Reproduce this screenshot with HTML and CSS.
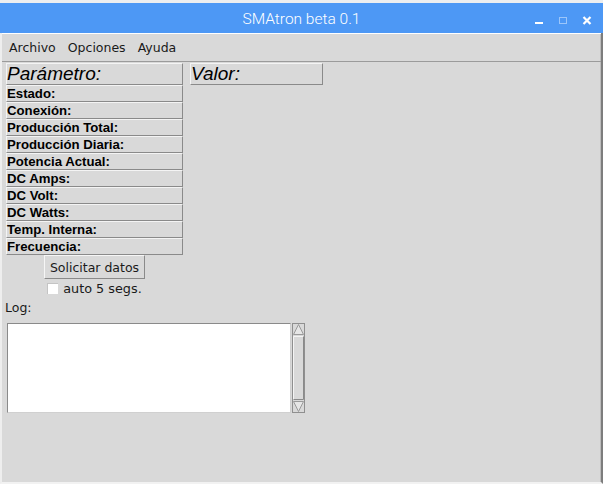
FILE: index.html
```html
<!DOCTYPE html>
<html lang="es">
<head>
<meta charset="utf-8">
<title>SMAtron beta 0.1</title>
<link rel="stylesheet" href="styles.css">
</head>
<body>
<div class="window">
  <div class="topline"></div>
  <div class="titlebar">
    <span></span>
    <span class="title">SMAtron beta 0.1</span>
    <div class="wincontrols">
      <svg class="wbtn" width="24" height="30" viewBox="0 0 24 30"><rect x="8" y="18" width="8" height="2" fill="#ffffff"/></svg>
      <svg class="wbtn" width="24" height="30" viewBox="0 0 24 30"><rect x="8.5" y="13.5" width="7" height="6" fill="none" stroke="#9cc6fa" stroke-width="1"/></svg>
      <svg class="wbtn" width="24" height="30" viewBox="0 0 24 30"><path d="M8.5 13 L15.5 20 M15.5 13 L8.5 20" stroke="#ffffff" stroke-width="2.2" fill="none"/></svg>
    </div>
  </div>
  <div class="main">
    <div class="menubar">
      <span class="menuitem">Archivo</span>
      <span class="menuitem">Opciones</span>
      <span class="menuitem">Ayuda</span>
    </div>
    <div class="content">
      <div class="grid">
        <div class="head">Parámetro:</div>
        <div class="head">Valor:</div>
        <div class="cell">Estado:</div>
        <div class="cell">Conexión:</div>
        <div class="cell">Producción Total:</div>
        <div class="cell">Producción Diaria:</div>
        <div class="cell">Potencia Actual:</div>
        <div class="cell">DC Amps:</div>
        <div class="cell">DC Volt:</div>
        <div class="cell">DC Watts:</div>
        <div class="cell">Temp. Interna:</div>
        <div class="cell">Frecuencia:</div>
      </div>
      <div class="controls">
        <button class="btn" type="button">Solicitar datos</button>
        <label class="check"><span class="box"></span><span>auto 5 segs.</span></label>
      </div>
      <div class="loglabel">Log:</div>
      <div class="logrow">
        <div class="textarea"></div>
        <svg class="scrollbar" width="13" height="90" viewBox="0 0 13 90">
          <rect x="0.5" y="0.5" width="12" height="89" fill="#d9d9d9" stroke="#8f8f8f"/>
          <polygon points="6.5,1.5 1.5,11.5 11.5,11.5" fill="#e6e6e6" stroke="#9a9a9a" stroke-width="1"/>
          <path d="M1.5 76.5 V13.5 H11.5" stroke="#f4f4f4" fill="none"/>
          <path d="M1.5 76.5 H11.5 V13.5" stroke="#8a8a8a" fill="none"/>
          <polygon points="1.5,78.5 11.5,78.5 6.5,88.5" fill="#e6e6e6" stroke="#9a9a9a" stroke-width="1"/>
        </svg>
      </div>
    </div>
  </div>
</div>
</body>
</html>
```

FILE: styles.css
```css
html, body {
  margin: 0;
  padding: 0;
}

body {
  width: 603px;
  height: 484px;
  overflow: hidden;
  background: #d9d9d9;
}

.window {
  display: flex;
  flex-direction: column;
  height: 484px;
}

.topline {
  height: 3px;
  background: #eceef0;
}

.titlebar {
  height: 30px;
  background: #4d98f5;
  display: grid;
  grid-template-columns: 1fr auto 1fr;
  align-items: center;
}

.title {
  font-family: "Roboto", "Liberation Sans", sans-serif;
  font-weight: 300;
  font-size: 15.5px;
  color: #ffffff;
  line-height: 30px;
  padding-top: 1px;
}

.wincontrols {
  justify-self: end;
  display: flex;
  padding-right: 4px;
}

.wbtn {
  display: block;
}

.main {
  flex: 1;
  display: flex;
  flex-direction: column;
  background: #d9d9d9;
  border-left: 2px solid #eeeeee;
  border-right: 2px solid #7d7d7d;
  border-bottom: 2px solid #f2f2f2;
  box-shadow: inset -1px 0 0 #bdbdbd;
}

.menubar {
  height: 27px;
  box-sizing: border-box;
  height: 29px;
  border-top: 1px solid #ffffff;
  border-bottom: 1px solid #9b9b9b;
  display: flex;
  align-items: center;
  gap: 12px;
  padding-left: 7px;
  padding-bottom: 1px;
  font-family: "DejaVu Sans", sans-serif;
  font-size: 12.5px;
  color: #1a1a1a;
}

.content {
  padding-left: 4px;
  display: flex;
  flex-direction: column;
  align-items: flex-start;
}

.grid {
  display: grid;
  grid-template-columns: 177px 133px;
  column-gap: 7px;
  margin-top: 1px;
}

.head {
  height: 22px;
  box-sizing: border-box;
  border-top: 1px solid #f4f4f4;
  border-left: 1px solid #f4f4f4;
  border-right: 1px solid #8a8a8a;
  border-bottom: 1px solid #8a8a8a;
  font-family: "Liberation Sans", sans-serif;
  font-style: italic;
  font-size: 19px;
  line-height: 20px;
  padding-left: 0;
  color: #000000;
}

.cell {
  grid-column: 1;
  height: 17px;
  box-sizing: border-box;
  border-top: 1px solid #f4f4f4;
  border-left: 1px solid #f4f4f4;
  border-right: 1px solid #8a8a8a;
  border-bottom: 1px solid #8a8a8a;
  font-family: "Liberation Sans", sans-serif;
  font-weight: bold;
  font-size: 13.2px;
  line-height: 15px;
  padding-left: 0;
  color: #000000;
}

.controls {
  width: 177px;
  display: flex;
  flex-direction: column;
  align-items: center;
}

.btn {
  margin: 0;
  height: 24px;
  width: 101px;
  padding: 0;
  background: #d9d9d9;
  border-top: 1px solid #f6f6f6;
  border-left: 1px solid #f6f6f6;
  border-right: 1px solid #8a8a8a;
  border-bottom: 1px solid #8a8a8a;
  border-radius: 0;
  font-family: "DejaVu Sans", sans-serif;
  font-size: 12.5px;
  color: #1a1a1a;
}

.check {
  margin-top: 3px;
  height: 13px;
  display: flex;
  align-items: center;
  gap: 5px;
  font-family: "DejaVu Sans", sans-serif;
  font-size: 12.8px;
  color: #1a1a1a;
}

.box {
  width: 11px;
  height: 11px;
  box-sizing: border-box;
  background: #ffffff;
  border-top: 1px solid #c4c4c4;
  border-left: 1px solid #c4c4c4;
}

.loglabel {
  margin-top: 6px;
  margin-left: -1px;
  height: 14px;
  line-height: 14px;
  font-family: "DejaVu Sans", sans-serif;
  font-size: 12.5px;
  color: #1a1a1a;
}

.logrow {
  margin-top: 8px;
  margin-left: 1px;
  display: flex;
  gap: 1px;
}

.textarea {
  width: 284px;
  height: 90px;
  box-sizing: border-box;
  background: #ffffff;
  border-top: 1px solid #8a8a8a;
  border-left: 1px solid #8a8a8a;
  border-right: 1px solid #d0d0d0;
  border-bottom: 1px solid #d0d0d0;
}

.scrollbar {
  display: block;
}
```
